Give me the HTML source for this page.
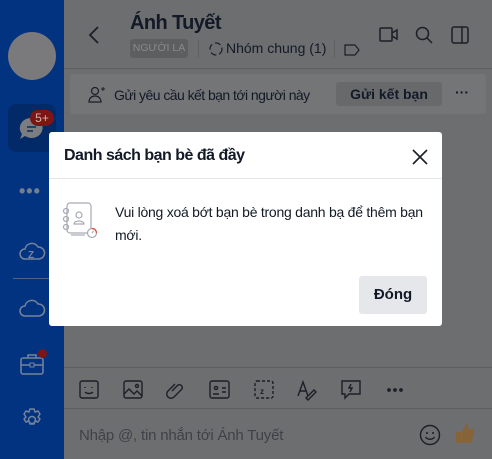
<!DOCTYPE html>
<html><head><meta charset="utf-8"><style>
*{margin:0;padding:0;box-sizing:border-box}
body{width:492px;height:459px;overflow:hidden;position:relative;font-family:"Liberation Sans",sans-serif;background:#6d6e70}
.side{position:absolute;left:0;top:0;width:64px;height:459px;background:#023381}
.abs{position:absolute}
.t{color:#121a27}
svg{position:absolute;overflow:visible}
</style></head><body>
<div class="side">
  <div class="abs" style="left:8px;top:32px;width:48px;height:48px;border-radius:50%;background:#7a7a7c"></div>
  <div class="abs" style="left:8px;top:104px;width:48px;height:48px;border-radius:8px;background:#022a68"></div>
  <svg style="left:18px;top:116px" width="28" height="26"><path d="M13 2a11 10 0 1 1-6 18l-5 3 2-5A11 10 0 0 1 13 2z" fill="#7b7d80"/><path d="M9 11h9M9 15h6" stroke="#2a3f66" stroke-width="2"/></svg>
  <div class="abs" style="left:30px;top:110px;width:24px;height:16px;border-radius:8px;background:#7d1515;color:#d8b0b0;font-size:12px;text-align:center;line-height:16px">5+</div>
  <div class="abs" style="left:19px;top:181px;color:#75808f;font-size:18px;letter-spacing:1px;font-weight:bold">•••</div>
  <svg style="left:19px;top:240px" width="26" height="22"><path d="M6 19a5 5 0 0 1 0-10 7 7 0 0 1 13-2 6 6 0 0 1 1 12z" fill="none" stroke="#76839a" stroke-width="1.5"/><text x="9" y="18" font-size="10" fill="#76839a" font-family="Liberation Sans" font-weight="bold">Z</text></svg>
  <div class="abs" style="left:13px;top:278px;width:40px;height:1px;background:#4a6290"></div>
  <svg style="left:19px;top:297px" width="26" height="20"><path d="M6 19a5 5 0 0 1 0-10 7 7 0 0 1 13-2 6 6 0 0 1 1 12z" fill="none" stroke="#76839a" stroke-width="1.5"/></svg>
  <svg style="left:20px;top:353px" width="26" height="24"><rect x="1" y="5" width="22" height="16" rx="2" fill="none" stroke="#76839a" stroke-width="1.5"/><path d="M8 5V2h8v3M1 12h22" fill="none" stroke="#76839a" stroke-width="1.5"/><rect x="10" y="10" width="4" height="4" fill="#023381" stroke="#76839a"/></svg>
  <div class="abs" style="left:38px;top:349px;width:9px;height:9px;border-radius:50%;background:#7d1515"></div>
  <svg style="left:20px;top:408px" width="24" height="24"><circle cx="12" cy="12" r="3.5" fill="none" stroke="#76839a" stroke-width="1.5"/><path d="M10 1h4l1 3 3-1 2 3-2 3 2 2-2 3-3-1-1 3h-4l-1-3-3 1-2-3 2-2-2-3 2-3 3 1z" fill="none" stroke="#76839a" stroke-width="1.5" stroke-linejoin="round"/></svg>
</div>
<svg style="left:88px;top:26px" width="12" height="18"><path d="M10 1L2 9l8 8" fill="none" stroke="#1b1f27" stroke-width="1.8"/></svg>
<div class="abs t" style="left:130px;top:12px;font-size:20px;font-weight:bold;letter-spacing:-0.6px">Ánh Tuyết</div>
<div class="abs" style="left:130px;top:39px;width:58px;height:19px;background:#5d5e60;border-radius:3px;color:#8a8b8d;font-size:10.5px;text-align:center;line-height:19px;white-space:nowrap">NGƯỜI LẠ</div>
<div class="abs" style="left:198px;top:40px;width:1px;height:18px;background:#5f6062"></div>
<svg style="left:208px;top:41px" width="16" height="16"><circle cx="8" cy="8" r="6" fill="none" stroke="#1b1f27" stroke-width="1.2" stroke-dasharray="6 3"/></svg>
<div class="abs t" style="left:226px;top:40px;font-size:14px">Nhóm chung (1)</div>
<div class="abs" style="left:334px;top:40px;width:1px;height:18px;background:#5f6062"></div>
<svg style="left:344px;top:44px" width="16" height="12"><path d="M1 1h10l4 5-4 5H1z" fill="none" stroke="#1b1f27" stroke-width="1.2"/></svg>
<svg style="left:379px;top:27px" width="20" height="16"><rect x="1" y="1" width="12" height="13" rx="1" fill="none" stroke="#1b1f27" stroke-width="1.5"/><path d="M13 6l5-3v9l-5-3" fill="none" stroke="#1b1f27" stroke-width="1.5"/></svg>
<svg style="left:415px;top:26px" width="18" height="18"><circle cx="7.5" cy="7.5" r="6" fill="none" stroke="#1b1f27" stroke-width="1.5"/><path d="M12 12l5 5" stroke="#1b1f27" stroke-width="1.5"/></svg>
<svg style="left:451px;top:26px" width="18" height="18"><rect x="1" y="1" width="16" height="16" rx="2" fill="none" stroke="#1b1f27" stroke-width="1.5"/><path d="M11 1v16" stroke="#1b1f27" stroke-width="1.5"/></svg>
<div class="abs" style="left:64px;top:68px;width:428px;height:1px;background:#5c5d5f"></div>
<div class="abs" style="left:70px;top:74px;width:416px;height:40px;background:#747577;border-radius:3px"></div>
<svg style="left:88px;top:86px" width="18" height="18"><circle cx="7" cy="5" r="3.5" fill="none" stroke="#1b1f27" stroke-width="1.2"/><path d="M1 16c0-4 3-6 6-6s6 2 6 6z" fill="none" stroke="#1b1f27" stroke-width="1.2"/><path d="M13 3h4M15 1v4" stroke="#1b1f27" stroke-width="1"/></svg>
<div class="abs t" style="left:114px;top:87px;font-size:14px;letter-spacing:-0.55px">Gửi yêu cầu kết bạn tới người này</div>
<div class="abs" style="left:336px;top:82px;width:106px;height:24px;background:#68696b;border-radius:3px;text-align:center;line-height:24px;font-size:14px;font-weight:bold"><span class="t">Gửi kết bạn</span></div>
<div class="abs t" style="left:455px;top:84px;font-size:14px;font-weight:bold">···</div>
<div class="abs" style="left:64px;top:367px;width:428px;height:1px;background:#5c5d5f"></div>
<div class="abs" style="left:64px;top:408px;width:428px;height:1px;background:#5c5d5f"></div>
<svg style="left:80px;top:380px" width="340" height="20" fill="none" stroke="#1b1f27" stroke-width="1.4">
<rect x="0" y="1" width="18" height="17" rx="2"/><path d="M5 7v1M12 7v1M5 12c2 2 6 2 8 0"/>
<rect x="44" y="1" width="18" height="17" rx="2"/><path d="M44 14l5-5 5 5 3-3 5 5"/><circle cx="57" cy="6" r="1.5"/>
<path d="M92 11l6-6a3 3 0 0 1 4 4l-8 8a4 4 0 0 1-6-6l7-7"/>
<rect x="130" y="1" width="19" height="17" rx="2"/><circle cx="136" cy="8" r="1.6"/><path d="M133 14h6M142 8h4M142 12h4"/>
<rect x="175" y="1" width="18" height="17" rx="2" stroke-dasharray="3 2"/><text x="180" y="14" font-size="8" fill="#1b1f27" stroke="none" font-family="Liberation Sans" font-weight="bold">z</text>
<path d="M218 16l5-14 5 14M220 11h6M226 18l8-8 2 2-8 8z"/>
<path d="M262 1h18v13h-11l-4 4v-4h-3z"/><path d="M271 4l-2 4h3l-2 4"/>
<circle cx="309" cy="10" r="1.2" fill="#1b1f27"/><circle cx="315" cy="10" r="1.2" fill="#1b1f27"/><circle cx="321" cy="10" r="1.2" fill="#1b1f27"/>
</svg>
<div class="abs" style="left:79px;top:427px;font-size:15px;color:#3e4248;letter-spacing:-0.2px">Nhập @, tin nhắn tới Ánh Tuyết</div>
<svg style="left:419px;top:424px" width="22" height="22"><circle cx="11" cy="11" r="9.5" fill="none" stroke="#1b1f27" stroke-width="1.4"/><circle cx="8" cy="9" r="1" fill="#1b1f27"/><circle cx="14" cy="9" r="1" fill="#1b1f27"/><path d="M6.5 13c2 3 7 3 9 0" fill="none" stroke="#1b1f27" stroke-width="1.4"/></svg>
<svg style="left:455px;top:422px" width="20" height="22"><path d="M1 10h5v11H1zM7 10l4-8c2 0 3 1 2 5h5c1 0 2 1 1 3l-2 9c0 1-1 2-2 2H7z" fill="#85643a"/></svg>
<div class="abs" style="left:49px;top:132px;width:393px;height:194px;background:#fff;border-radius:3px">
  <div class="abs t" style="left:15px;top:15px;font-size:16px;font-weight:bold;letter-spacing:-0.5px">Danh sách bạn bè đã đầy</div>
  <svg style="left:363px;top:17px" width="16" height="16"><path d="M1 1l14 14M15 1L1 15" stroke="#1b1f27" stroke-width="1.6"/></svg>
  <div class="abs" style="left:0;top:46px;width:393px;height:1px;background:#e3e5e8"></div>
  <svg style="left:14px;top:70px" width="40" height="40" fill="none" stroke="#a6abb3" stroke-width="1.2">
    <rect x="4" y="1" width="24" height="30" rx="3"/><circle cx="3" cy="9" r="2.5"/><circle cx="3" cy="17" r="2.5"/><circle cx="3" cy="25" r="2.5"/>
    <circle cx="16" cy="13" r="3"/><path d="M11 22c0-4 10-4 10 0z"/><path d="M8 33h14"/>
    <circle cx="29" cy="31" r="4.5" fill="#fff"/><path d="M29 31l1.5-2"/><path d="M29 26.5a4.5 4.5 0 0 1 4.5 4.5" stroke="#e0443a"/>
  </svg>
  <div class="abs t" style="left:66px;top:69px;font-size:14px;line-height:23px;width:320px;letter-spacing:-0.25px">Vui lòng xoá bớt bạn bè trong danh bạ để thêm bạn mới.</div>
  <div class="abs t" style="left:310px;top:144px;width:68px;height:38px;background:#e5e7eb;border-radius:3px;text-align:center;line-height:38px;font-size:15px;font-weight:bold">Đóng</div>
</div>
</body></html>
